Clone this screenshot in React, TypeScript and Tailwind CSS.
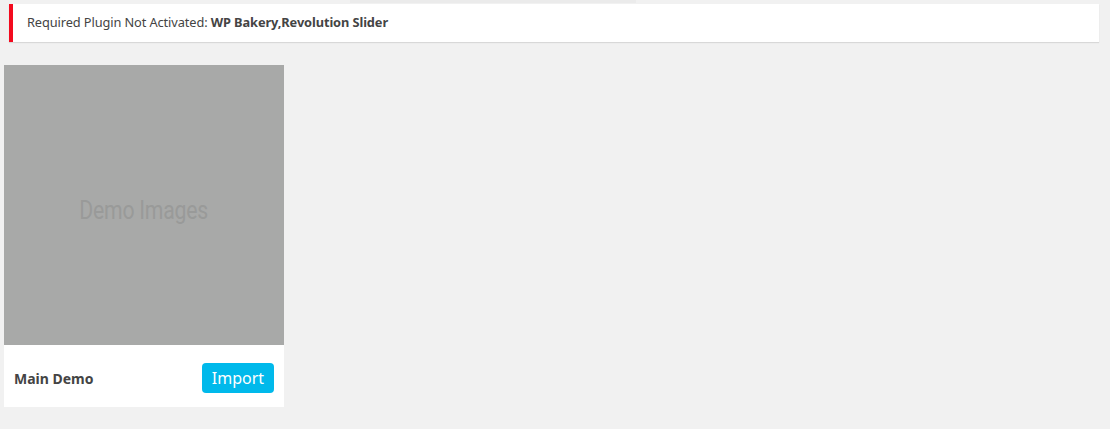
export default function App() {
  return (
    <div className="min-h-[429px] bg-[#f1f1f1] font-['Noto_Sans',sans-serif] text-[#444]">
      <div className="h-[3px] ml-[350px] w-[286px] bg-[#ebebeb]" />
      <div className="pl-[9px] pr-[11px] pt-[1px]">
        <div className="flex h-[38px] items-center border-l-4 border-[#f30a1e] bg-white pl-[14px] text-[12.8px] tracking-[-0.1px] shadow-[0_1px_1px_rgba(0,0,0,0.1)]">
          <p>
            Required Plugin Not Activated: <strong className="font-bold">WP Bakery,Revolution Slider</strong>
          </p>
        </div>
      </div>

      <div className="mt-[23px] ml-[4px] w-[280px] bg-white">
        <div className="flex h-[280px] items-center justify-center bg-[#a8a9a8] pt-[11px]">
          <span className="font-['Roboto',sans-serif] text-[25px] tracking-[-0.3px] text-[#999a99] scale-x-[0.85]">Demo Images</span>
        </div>
        <div className="flex h-[62px] items-center justify-between pl-[10px] pr-[10px] pt-[4px]">
          <h3 className="text-[14px] font-bold">Main Demo</h3>
          <button className="flex h-[30px] w-[72px] items-center justify-center rounded-[4px] bg-[#00b9eb] text-[16px] text-white">
            Import
          </button>
        </div>
      </div>
    </div>
  );
}
